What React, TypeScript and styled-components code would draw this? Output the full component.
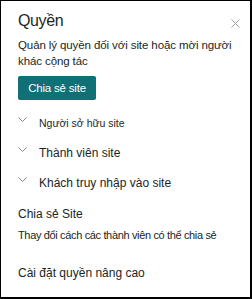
import React from "react";
import styled, { createGlobalStyle } from "styled-components";

const Global = createGlobalStyle`
  html, body { margin: 0; padding: 0; background: #fff; }
  * { box-sizing: border-box; }
  body { font-family: "Segoe UI", "Liberation Sans", Arial, sans-serif; color: #201f1e; }
`;

const Panel = styled.div`
  width: 252px;
  height: 299px;
  border-style: solid;
  border-color: #000;
  border-width: 1px 2px 2px 1px;
  background: #fff;
  padding: 9px 0 0 17px;
  overflow: hidden;
`;

const Header = styled.div`
  display: flex;
  align-items: center;
  justify-content: space-between;
  padding-right: 9px;
  height: 22px;
`;

const Title = styled.h1`
  margin: 0;
  font-size: 16px;
  letter-spacing: -0.4px;
  font-weight: 400;
  line-height: 22px;
`;

const Close = styled.button`
  border: 0;
  background: none;
  padding: 0;
  width: 10px;
  height: 10px;
  display: flex;
  margin-top: 5px;
`;

const Desc = styled.p`
  margin: 5px 0 0;
  font-size: 11.5px;
  letter-spacing: -0.1px;
  line-height: 16px;
  white-space: nowrap;
`;

const Primary = styled.button`
  margin-top: 7px;
  width: 78px;
  height: 24px;
  border: 0;
  border-radius: 2px;
  background: #0f7075;
  color: #fff;
  font-family: inherit;
  font-size: 11.5px;
  letter-spacing: -0.2px;
  padding: 0;
  display: block;
`;

const Groups = styled.div`
  margin-top: 8px;
  display: flex;
  flex-direction: column;
`;

const Group = styled.div`
  display: flex;
  align-items: center;
  height: 30px;
`;

const Chevron = styled.span`
  width: 21px;
  display: flex;
  margin-top: -6px;
`;

const GroupLabel = styled.span<{ $small?: boolean }>`
  font-size: ${(p) => (p.$small ? "10.5px" : "12px")};
`;

const Links = styled.div`
  margin-top: 8px;
  display: flex;
  flex-direction: column;
  font-size: 12px;
`;

const LinkRow = styled.div<{ $gap: number; $compact?: boolean }>`
  margin-top: ${(p) => p.$gap}px;
  line-height: 16px;
  white-space: nowrap;
  font-size: ${(p) => (p.$compact ? "11px" : "12px")};
  letter-spacing: ${(p) => (p.$compact ? "-0.35px" : "0")};
`;

const ChevronIcon = () => (
  <svg width="9" height="6" viewBox="0 0 9 6">
    <path d="M0.5 0.5 L4.5 4.5 L8.5 0.5" fill="none" stroke="#8a8886" strokeWidth="1" />
  </svg>
);

export default function App() {
  return (
    <>
      <Global />
      <Panel>
        <Header>
          <Title>Quyền</Title>
          <Close aria-label="Đóng">
            <svg width="9" height="9" viewBox="0 0 9 9">
              <path d="M0.5 0.5 L8.5 8.5 M8.5 0.5 L0.5 8.5" stroke="#a19f9d" strokeWidth="1" />
            </svg>
          </Close>
        </Header>
        <Desc>
          Quản lý quyền đối với site hoặc mời người
          <br />
          khác cộng tác
        </Desc>
        <Primary>Chia sẻ site</Primary>
        <Groups>
          <Group>
            <Chevron><ChevronIcon /></Chevron>
            <GroupLabel $small>Người sở hữu site</GroupLabel>
          </Group>
          <Group>
            <Chevron><ChevronIcon /></Chevron>
            <GroupLabel>Thành viên site</GroupLabel>
          </Group>
          <Group>
            <Chevron><ChevronIcon /></Chevron>
            <GroupLabel>Khách truy nhập vào site</GroupLabel>
          </Group>
        </Groups>
        <Links>
          <LinkRow $gap={0}>Chia sẻ Site</LinkRow>
          <LinkRow $gap={5} $compact>Thay đổi cách các thành viên có thể chia sẻ</LinkRow>
          <LinkRow $gap={22}>Cài đặt quyền nâng cao</LinkRow>
        </Links>
      </Panel>
    </>
  );
}
